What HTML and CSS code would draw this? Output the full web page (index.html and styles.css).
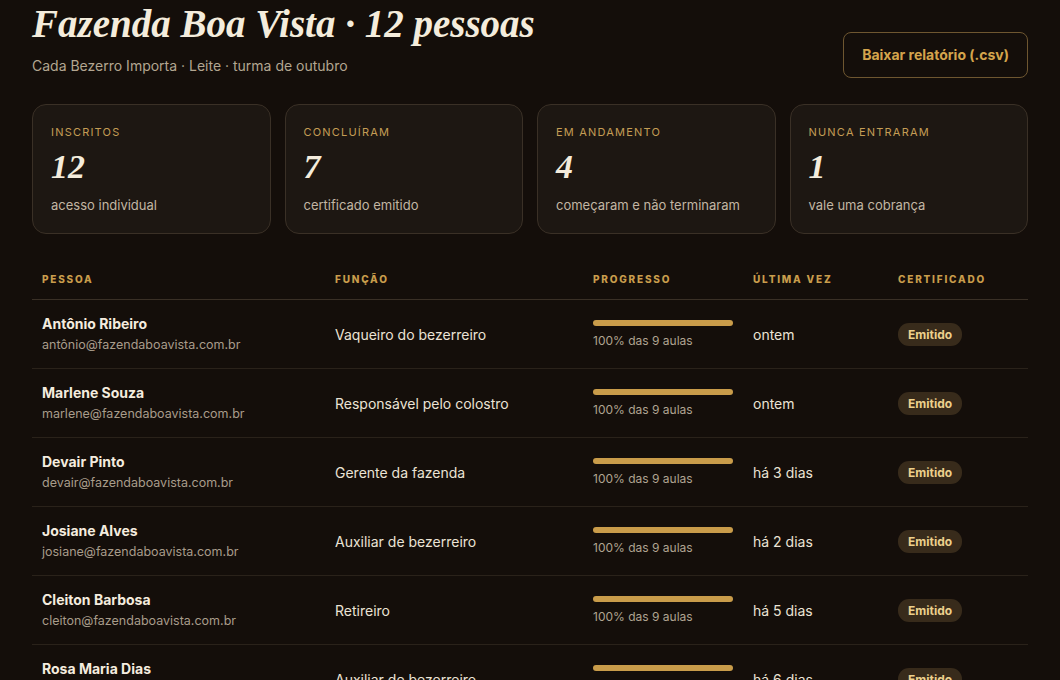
FILE: index.html
```html
<!DOCTYPE html>
<html lang="pt-BR">

<head>
  <meta charset="UTF-8">
  <meta name="viewport" content="width=device-width, initial-scale=1.0">
  <title>Fazenda Boa Vista · Relatório da turma</title>
  <link rel="stylesheet" href="styles.css">
</head>

<body>

  <div class="page">
    <header class="top">
      <div class="top-text">
        <h1>Fazenda Boa Vista · 12 pessoas</h1>
        <p class="subtitle">Cada Bezerro Importa · Leite · turma de outubro</p>
      </div>
      <a href="#" class="button-outline">Baixar relatório (.csv)</a>
    </header>

    <div class="stats">
      <div class="stat-card">
        <div class="stat-label">Inscritos</div>
        <div class="stat-value">12</div>
        <div class="stat-note">acesso individual</div>
      </div>
      <div class="stat-card">
        <div class="stat-label">Concluíram</div>
        <div class="stat-value">7</div>
        <div class="stat-note">certificado emitido</div>
      </div>
      <div class="stat-card">
        <div class="stat-label">Em andamento</div>
        <div class="stat-value">4</div>
        <div class="stat-note">começaram e não terminaram</div>
      </div>
      <div class="stat-card">
        <div class="stat-label">Nunca entraram</div>
        <div class="stat-value">1</div>
        <div class="stat-note">vale uma cobrança</div>
      </div>
    </div>

    <table class="people">
      <colgroup>
        <col class="col-person">
        <col class="col-role">
        <col class="col-progress">
        <col class="col-last">
        <col class="col-cert">
      </colgroup>
      <thead>
        <tr>
          <th>Pessoa</th>
          <th>Função</th>
          <th>Progresso</th>
          <th>Última vez</th>
          <th>Certificado</th>
        </tr>
      </thead>
      <tbody>
        <tr>
          <td>
            <div class="name">Antônio Ribeiro</div>
            <div class="email">antônio@fazendaboavista.com.br</div>
          </td>
          <td>Vaqueiro do bezerreiro</td>
          <td>
            <div class="bar"><div class="bar-fill" style="width: 100%"></div></div>
            <div class="bar-text">100% das 9 aulas</div>
          </td>
          <td>ontem</td>
          <td><span class="badge">Emitido</span></td>
        </tr>
        <tr>
          <td>
            <div class="name">Marlene Souza</div>
            <div class="email">marlene@fazendaboavista.com.br</div>
          </td>
          <td>Responsável pelo colostro</td>
          <td>
            <div class="bar"><div class="bar-fill" style="width: 100%"></div></div>
            <div class="bar-text">100% das 9 aulas</div>
          </td>
          <td>ontem</td>
          <td><span class="badge">Emitido</span></td>
        </tr>
        <tr>
          <td>
            <div class="name">Devair Pinto</div>
            <div class="email">devair@fazendaboavista.com.br</div>
          </td>
          <td>Gerente da fazenda</td>
          <td>
            <div class="bar"><div class="bar-fill" style="width: 100%"></div></div>
            <div class="bar-text">100% das 9 aulas</div>
          </td>
          <td>há 3 dias</td>
          <td><span class="badge">Emitido</span></td>
        </tr>
        <tr>
          <td>
            <div class="name">Josiane Alves</div>
            <div class="email">josiane@fazendaboavista.com.br</div>
          </td>
          <td>Auxiliar de bezerreiro</td>
          <td>
            <div class="bar"><div class="bar-fill" style="width: 100%"></div></div>
            <div class="bar-text">100% das 9 aulas</div>
          </td>
          <td>há 2 dias</td>
          <td><span class="badge">Emitido</span></td>
        </tr>
        <tr>
          <td>
            <div class="name">Cleiton Barbosa</div>
            <div class="email">cleiton@fazendaboavista.com.br</div>
          </td>
          <td>Retireiro</td>
          <td>
            <div class="bar"><div class="bar-fill" style="width: 100%"></div></div>
            <div class="bar-text">100% das 9 aulas</div>
          </td>
          <td>há 5 dias</td>
          <td><span class="badge">Emitido</span></td>
        </tr>
        <tr>
          <td>
            <div class="name">Rosa Maria Dias</div>
            <div class="email">rosa@fazendaboavista.com.br</div>
          </td>
          <td>Auxiliar de bezerreiro</td>
          <td>
            <div class="bar"><div class="bar-fill" style="width: 100%"></div></div>
            <div class="bar-text">100% das 9 aulas</div>
          </td>
          <td>há 6 dias</td>
          <td><span class="badge">Emitido</span></td>
        </tr>
        <tr>
          <td>
            <div class="name">Edson Carvalho</div>
            <div class="email">edson@fazendaboavista.com.br</div>
          </td>
          <td>Tratador</td>
          <td>
            <div class="bar"><div class="bar-fill" style="width: 100%"></div></div>
            <div class="bar-text">100% das 9 aulas</div>
          </td>
          <td>há 1 semana</td>
          <td><span class="badge">Emitido</span></td>
        </tr>
      </tbody>
    </table>
  </div>

</body>

</html>
```

FILE: styles.css
```css
body {
  margin: 0;
  padding: 0;
  background-color: #140e0a;
  color: #ebe3d5;
  font-family: Inter, "Noto Sans", sans-serif;
}

.page {
  padding: 0 32px 40px;
}

/* header */

.top {
  display: flex;
  justify-content: space-between;
  align-items: flex-start;
}

.top h1 {
  margin: 0;
  font-family: "Liberation Serif", serif;
  font-style: italic;
  font-weight: 700;
  font-size: 39px;
  line-height: 48px;
  color: #f4ecdc;
}

.subtitle {
  margin: 8px 0 0;
  font-size: 14px;
  line-height: 20px;
  color: #b3a691;
}

.button-outline {
  margin-top: 32px;
  padding: 13px 18px;
  border: 1px solid #6e5630;
  border-radius: 8px;
  color: #d4a54c;
  font-size: 14px;
  font-weight: 700;
  line-height: 18px;
  text-decoration: none;
}

/* stat cards */

.stats {
  display: grid;
  grid-template-columns: repeat(4, 1fr);
  gap: 14px;
  margin-top: 26px;
}

.stat-card {
  background-color: #1d1712;
  border: 1px solid #3a3026;
  border-radius: 14px;
  padding: 20px 18px 19px;
}

.stat-label {
  font-size: 11px;
  line-height: 14px;
  letter-spacing: 1.2px;
  text-transform: uppercase;
  color: #c49d55;
}

.stat-value {
  margin-top: 8px;
  font-family: "Liberation Serif", serif;
  font-style: italic;
  font-weight: 700;
  font-size: 34px;
  line-height: 40px;
  color: #f4ecdc;
}

.stat-note {
  margin-top: 9px;
  font-size: 13px;
  line-height: 18px;
  color: #c2b6a3;
}

/* table */

.people {
  width: 100%;
  margin-top: 26px;
  border-collapse: collapse;
  table-layout: fixed;
}

.col-person { width: 293px; }
.col-role { width: 258px; }
.col-progress { width: 160px; }
.col-last { width: 145px; }
.col-cert { width: 140px; }

.people th {
  padding: 13px 10px;
  border-bottom: 1px solid #3a3026;
  text-align: left;
  font-size: 10px;
  line-height: 13px;
  font-weight: 800;
  letter-spacing: 1.8px;
  text-transform: uppercase;
  color: #c99d4c;
}

.people td {
  padding: 15px 10px 14px;
  border-bottom: 1px solid #2a221a;
  vertical-align: middle;
  font-size: 14px;
  line-height: 18px;
  color: #ebe3d5;
}

.name {
  font-weight: 700;
  color: #f4ecdf;
}

.email {
  margin-top: 3px;
  font-size: 12.5px;
  color: #a89c8a;
}

.bar {
  width: 140px;
  height: 6px;
  border-radius: 3px;
  background-color: #3a3026;
  overflow: hidden;
}

.bar-fill {
  height: 100%;
  background-color: #c99c4a;
}

.bar-text {
  margin-top: 7px;
  font-size: 12px;
  line-height: 16px;
  color: #b0a491;
}

.badge {
  display: inline-block;
  padding: 4px 10px;
  border-radius: 11px;
  background-color: #382b1b;
  color: #ecd08c;
  font-size: 12px;
  font-weight: 700;
  line-height: 15px;
}
```
